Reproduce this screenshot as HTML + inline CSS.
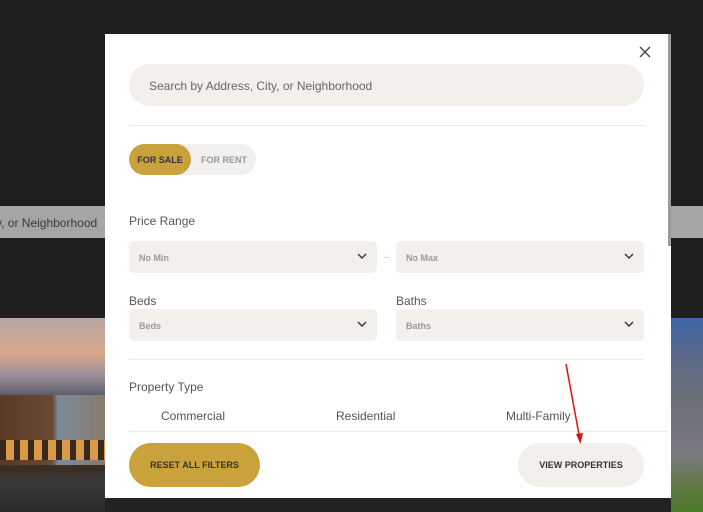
<!DOCTYPE html>
<html><head><style>
*{margin:0;padding:0;box-sizing:border-box}
body{width:703px;height:512px;overflow:hidden;background:#1f1f1f;position:relative;font-family:"Liberation Sans",sans-serif}
.a{position:absolute}
.sel{position:absolute;background:#f3f0eb;border-radius:5px;height:32px;font-size:9px;font-weight:bold;color:#999;padding:12px 0 0 10px}
.sel svg{position:absolute;right:10px;top:12px}
.lbl{position:absolute;font-size:12px;color:#555}
.hr{position:absolute;left:129px;width:515px;height:1px;background:#eeeae4}
</style></head><body>
<div class="a" style="left:0;top:206px;width:105px;height:32px;background:#a5a5a5;color:#3a3a3a;font-size:12px;padding-top:10px;white-space:nowrap;overflow:hidden;text-indent:-4px">y, or Neighborhood</div>
<div class="a" style="left:671px;top:206px;width:32px;height:32px;background:#a5a5a5"></div>
<div class="a" style="left:0;top:318px;width:105px;height:194px;background:linear-gradient(180deg,#b8a6a6 0%,#d8a88a 18%,#9a8c98 30%,#5a5c6a 40%,#4a3a2e 60%,#3a2e24 78%,#3a3a3c 85%,#2a2a2c 100%)"></div>
<div class="a" style="left:0;top:395px;width:105px;height:70px;background:linear-gradient(90deg,#5a3a24 0,#6a4a30 50%,#7a8a9a 55%,#8a7a6a 100%)"></div>
<div class="a" style="left:0;top:440px;width:105px;height:20px;background:repeating-linear-gradient(90deg,#3a2a1e 0 6px,#d89a4a 6px 14px)"></div>
<div class="a" style="left:671px;top:318px;width:32px;height:194px;background:linear-gradient(180deg,#3c64a8 0%,#5a6a88 20%,#6a6e78 40%,#7a7a80 70%,#5a7a3a 90%,#4a7a2a 100%)"></div>
<div class="a" style="left:105px;top:498px;width:566px;height:14px;background:#222"></div>
<div class="a" style="left:105px;top:34px;width:566px;height:464px;background:#fff"></div>
<div class="a" style="left:668px;top:34px;width:3px;height:212px;background:#9a9a9a"></div>
<svg class="a" style="left:639px;top:46px" width="12" height="12"><path d="M1 1L11 11M11 1L1 11" stroke="#444" stroke-width="1.3"/></svg>
<div class="a" style="left:129px;top:64px;width:515px;height:42px;background:#f3f0eb;border-radius:21px;font-size:12px;color:#666;padding:15px 0 0 20px">Search by Address, City, or Neighborhood</div>
<div class="hr" style="top:125px"></div>
<div class="a" style="left:129px;top:144px;width:127px;height:31px;background:#f1f0ee;border-radius:16px"></div>
<div class="a" style="left:129px;top:144px;width:62px;height:31px;background:#c9a23c;border-radius:16px;font-size:9px;font-weight:bold;color:#333;text-align:center;padding-top:11px">FOR SALE</div>
<div class="a" style="left:195px;top:155px;width:58px;font-size:9px;font-weight:bold;color:#999;text-align:center">FOR RENT</div>
<div class="lbl" style="left:129px;top:214px">Price Range</div>
<div class="sel" style="left:129px;top:241px;width:248px">No Min<svg width="10" height="7"><path d="M1 1L5 5L9 1" stroke="#333" stroke-width="1.4" fill="none"/></svg></div>
<div class="a" style="left:384px;top:257px;width:6px;height:1px;background:#ddd"></div>
<div class="sel" style="left:396px;top:241px;width:248px">No Max<svg width="10" height="7"><path d="M1 1L5 5L9 1" stroke="#333" stroke-width="1.4" fill="none"/></svg></div>
<div class="lbl" style="left:129px;top:294px">Beds</div>
<div class="lbl" style="left:396px;top:294px">Baths</div>
<div class="sel" style="left:129px;top:309px;width:248px">Beds<svg width="10" height="7"><path d="M1 1L5 5L9 1" stroke="#333" stroke-width="1.4" fill="none"/></svg></div>
<div class="sel" style="left:396px;top:309px;width:248px">Baths<svg width="10" height="7"><path d="M1 1L5 5L9 1" stroke="#333" stroke-width="1.4" fill="none"/></svg></div>
<div class="hr" style="top:359px"></div>
<div class="lbl" style="left:129px;top:380px">Property Type</div>
<div class="lbl" style="left:161px;top:409px">Commercial</div>
<div class="lbl" style="left:336px;top:409px">Residential</div>
<div class="lbl" style="left:506px;top:409px">Multi-Family</div>
<div class="a" style="left:129px;top:431px;width:539px;height:1px;background:#eeeae4"></div>
<div class="a" style="left:129px;top:443px;width:131px;height:44px;background:#c9a23c;border-radius:22px;font-size:9px;font-weight:bold;color:#333;text-align:center;padding-top:17px">RESET ALL FILTERS</div>
<div class="a" style="left:518px;top:443px;width:126px;height:44px;background:#f3f0eb;border-radius:22px;font-size:9px;font-weight:bold;color:#333;text-align:center;padding-top:17px">VIEW PROPERTIES</div>
<svg class="a" style="left:560px;top:362px" width="30" height="86"><path d="M6 2L20 78" stroke="#e01010" stroke-width="1.5"/><path d="M16 72L20.5 82L23 71Z" fill="#e01010"/></svg>
</body></html>
